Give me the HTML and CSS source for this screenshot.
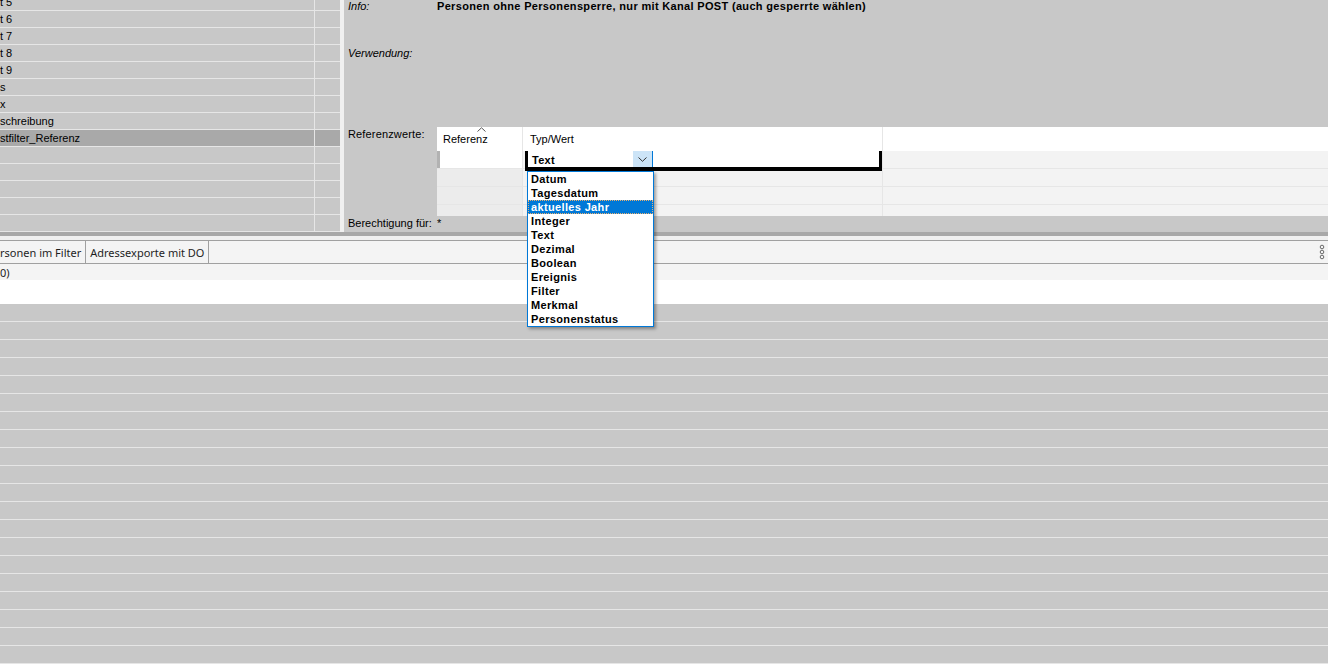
FILE: index.html
```html
<!DOCTYPE html>
<html lang="de">
<head>
<meta charset="UTF-8">
<title>Filter</title>
<link rel="stylesheet" href="styles.css">
</head>
<body>
    <div class="upper">
        <div class="list">
            <div class="list-body">
                <div class="list-row"><div class="name">t 5</div><div class="extra"></div></div>
                <div class="list-row"><div class="name">t 6</div><div class="extra"></div></div>
                <div class="list-row"><div class="name">t 7</div><div class="extra"></div></div>
                <div class="list-row"><div class="name">t 8</div><div class="extra"></div></div>
                <div class="list-row"><div class="name">t 9</div><div class="extra"></div></div>
                <div class="list-row"><div class="name">s</div><div class="extra"></div></div>
                <div class="list-row"><div class="name">x</div><div class="extra"></div></div>
                <div class="list-row"><div class="name">schreibung</div><div class="extra"></div></div>
                <div class="list-row selected"><div class="name">stfilter_Referenz</div><div class="extra"></div></div>
                <div class="list-row"><div class="name"></div><div class="extra"></div></div>
                <div class="list-row"><div class="name"></div><div class="extra"></div></div>
                <div class="list-row"><div class="name"></div><div class="extra"></div></div>
                <div class="list-row"><div class="name"></div><div class="extra"></div></div>
                <div class="list-row"><div class="name"></div><div class="extra"></div></div>
            </div>
        </div>
        <div class="split-v"></div>
        <div class="detail">
            <div class="field field-info">
                <div class="label italic">Info:</div>
                <div class="value bold info-text">Personen ohne Personensperre, nur mit Kanal POST (auch gesperrte wählen)</div>
            </div>
            <div class="field field-use">
                <div class="label italic">Verwendung:</div>
                <div class="value"></div>
            </div>
            <div class="field field-ref">
                <div class="label">Referenzwerte:</div>
                <div class="ref-table">
                    <div class="ref-head">
                        <div class="col-ref">Referenz
                            <svg class="sort-caret" width="9" height="5" viewBox="0 0 9 5"><path d="M0.5 4.5 L4.5 0.8 L8.5 4.5" fill="none" stroke="#555" stroke-width="1"/></svg>
                        </div>
                        <div class="col-type">Typ/Wert</div>
                        <div class="col-fill"></div>
                    </div>
                    <div class="ref-row first">
                        <div class="col-ref"></div>
                        <div class="col-type">
                            <div class="editor">
                                <div class="combo">
                                    <span class="combo-text">Text</span>
                                    <span class="combo-btn">
                                        <svg width="9" height="5" viewBox="0 0 9 5"><path d="M0.5 0.5 L4.5 4.3 L8.5 0.5" fill="none" stroke="#333" stroke-width="1"/></svg>
                                    </span>
                                </div>
                            </div>
                            <ul class="dropdown">
                                <li>Datum</li>
                                <li>Tagesdatum</li>
                                <li class="active">aktuelles Jahr</li>
                                <li>Integer</li>
                                <li>Text</li>
                                <li>Dezimal</li>
                                <li>Boolean</li>
                                <li>Ereignis</li>
                                <li>Filter</li>
                                <li>Merkmal</li>
                                <li>Personenstatus</li>
                            </ul>
                        </div>
                        <div class="col-fill"></div>
                    </div>
                    <div class="ref-row">
                        <div class="col-ref"></div>
                        <div class="col-type"></div>
                        <div class="col-fill"></div>
                    </div>
                    <div class="ref-row">
                        <div class="col-ref"></div>
                        <div class="col-type"></div>
                        <div class="col-fill"></div>
                    </div>
                    <div class="ref-row last">
                        <div class="col-ref"></div>
                        <div class="col-type"></div>
                        <div class="col-fill"></div>
                    </div>
                </div>
            </div>
            <div class="field field-perm">
                <div class="label">Berechtigung für:</div>
                <div class="value">*</div>
            </div>
        </div>
    </div>

    <div class="split-h"></div>

    <div class="lower">
        <div class="tabs">
            <div class="tab first">rsonen im Filter</div>
            <div class="tab">Adressexporte mit DO</div>
            <div class="grip">
                <svg width="6" height="16" viewBox="0 0 6 16">
                    <circle cx="3" cy="3" r="1.8" fill="none" stroke="#6a6a6a" stroke-width="1"/>
                    <circle cx="3" cy="8" r="1.8" fill="none" stroke="#6a6a6a" stroke-width="1"/>
                    <circle cx="3" cy="13" r="1.8" fill="none" stroke="#6a6a6a" stroke-width="1"/>
                </svg>
            </div>
        </div>
        <div class="status-row">0)</div>
        <div class="blank-row"></div>
        <div class="grid-rows">
            <div class="grid-row"></div><div class="grid-row"></div><div class="grid-row"></div><div class="grid-row"></div>
            <div class="grid-row"></div><div class="grid-row"></div><div class="grid-row"></div><div class="grid-row"></div>
            <div class="grid-row"></div><div class="grid-row"></div><div class="grid-row"></div><div class="grid-row"></div>
            <div class="grid-row"></div><div class="grid-row"></div><div class="grid-row"></div><div class="grid-row"></div>
            <div class="grid-row"></div><div class="grid-row"></div><div class="grid-row"></div><div class="grid-row"></div>
        </div>
    </div>
</body>
</html>
```

FILE: styles.css
```css
body {
    margin: 0;
    width: 1328px;
    height: 664px;
    overflow: hidden;
    background: #c8c8c8;
    font-family: "Liberation Sans", Arial, sans-serif;
    font-size: 11px;
    color: #000;
}

/* upper part: list + detail */
.upper {
    display: flex;
    height: 232px;
}

.list {
    width: 340px;
    flex: none;
    overflow: hidden;
}

.list-body {
    margin-top: -6px;
}

.list-row {
    display: flex;
    height: 16px;
    line-height: 16px;
    border-bottom: 1px solid #e6e6e6;
}

.list-row.selected {
    background: #a9a9a9;
}

.list-row .name {
    width: 314px;
    border-right: 1px solid #e6e6e6;
    white-space: nowrap;
    overflow: hidden;
}

.list-row .extra {
    flex: 1;
}

.split-v {
    width: 4px;
    flex: none;
    background: #f0f0f0;
}

.detail {
    flex: 1;
    padding-left: 4px;
    position: relative;
}

.field {
    display: flex;
}

.field .label {
    width: 89px;
    flex: none;
    white-space: nowrap;
}

.italic {
    font-style: italic;
}

.bold {
    font-weight: bold;
}

.info-text {
    letter-spacing: 0.33px;
    white-space: nowrap;
}

.field-info {
    margin-top: -3px;
    height: 47px;
    line-height: 18px;
}

.field-use {
    height: 83px;
    line-height: 18px;
}

.field-ref {
    height: 89px;
    line-height: 14px;
}

.field-ref .label {
    letter-spacing: 0.15px;
}

.field-perm {
    height: 16px;
    line-height: 14px;
}

/* reference value table */
.ref-table {
    flex: 1;
    height: 89px;
}

.ref-head {
    display: flex;
    height: 24px;
    line-height: 24px;
    background: #fff;
}

.ref-head .col-ref {
    position: relative;
    width: 86px;
    padding-left: 6px;
    box-sizing: border-box;
    border-right: 1px solid #e6e6e6;
}

.ref-head .col-type {
    width: 360px;
    padding-left: 7px;
    box-sizing: border-box;
    border-right: 1px solid #e6e6e6;
}

.ref-head .col-fill {
    flex: 1;
}

.sort-caret {
    position: absolute;
    left: 40px;
    top: 0;
}

.ref-row {
    display: flex;
    height: 17px;
    border-bottom: 1px solid #e6e6e6;
    background: #f3f3f3;
}

.ref-row.last {
    height: 11px;
    border-bottom: none;
}

.ref-row .col-ref {
    width: 86px;
    box-sizing: border-box;
    background: #ececec;
    border-right: 1px solid #e4e4e4;
}

.ref-row .col-type {
    position: relative;
    width: 360px;
    box-sizing: border-box;
    border-right: 1px solid #e6e6e6;
}

.ref-row .col-fill {
    flex: 1;
}

.ref-row.first .col-ref {
    background: #fff;
    border-left: 3px solid #b2b2b2;
}

.ref-row.first .col-type {
    z-index: 5;
}

/* in-place editor */
.editor {
    position: absolute;
    left: 2px;
    top: 0;
    width: 357px;
    height: 20px;
    box-sizing: border-box;
    background: #fff;
    border-left: 3px solid #000;
    border-right: 3px solid #000;
    border-bottom: 4px solid #000;
}

.combo {
    display: flex;
    width: 125px;
    height: 16px;
}

.combo-text {
    flex: 1;
    padding: 1px 0 0 4px;
    line-height: 16px;
    font-weight: bold;
    font-size: 11px;
    letter-spacing: 0.3px;
}

.combo-btn {
    width: 19px;
    background: #cce4f7;
    border-right: 1px solid #0078d7;
    display: flex;
    align-items: center;
    justify-content: center;
}

.dropdown {
    position: absolute;
    left: 4px;
    top: 20px;
    width: 127px;
    margin: 0;
    padding: 0;
    list-style: none;
    background: #fff;
    border: 1px solid #0078d7;
    box-sizing: border-box;
    box-shadow: 2px 2px 3px rgba(0, 0, 0, 0.35);
    z-index: 10;
}

.dropdown li {
    height: 14px;
    line-height: 14px;
    padding-left: 3px;
    font-weight: bold;
    letter-spacing: 0.35px;
    white-space: nowrap;
}

.dropdown li.active {
    background: #0078d7;
    color: #fff;
    outline: 1px dotted #e8b070;
    outline-offset: -1px;
}

/* splitter + lower part */
.split-h {
    height: 4px;
    border-top: 4px solid #a8a8a8;
    background: #f0f0f0;
}

.lower {
    font-family: "Noto Sans", "Liberation Sans", sans-serif;
    font-size: 11px;
    color: #1e1e1e;
}

.tabs {
    display: flex;
    height: 22px;
    line-height: 24px;
    background: #f4f4f4;
    border-top: 1px solid #a0a0a0;
    border-bottom: 1px solid #a0a0a0;
}

.tab {
    padding: 0 4px;
    border-right: 1px solid #a0a0a0;
    white-space: nowrap;
}

.tab.first {
    padding-left: 0;
}

.grip {
    margin-left: auto;
    padding: 3px 3px 0 0;
    line-height: 0;
}

.status-row {
    height: 16px;
    line-height: 18px;
    background: #f4f4f4;
}

.blank-row {
    height: 24px;
    background: #fff;
}

.grid-row {
    height: 17px;
    border-bottom: 1px solid #e6e6e6;
    background: #c8c8c8;
}
```
